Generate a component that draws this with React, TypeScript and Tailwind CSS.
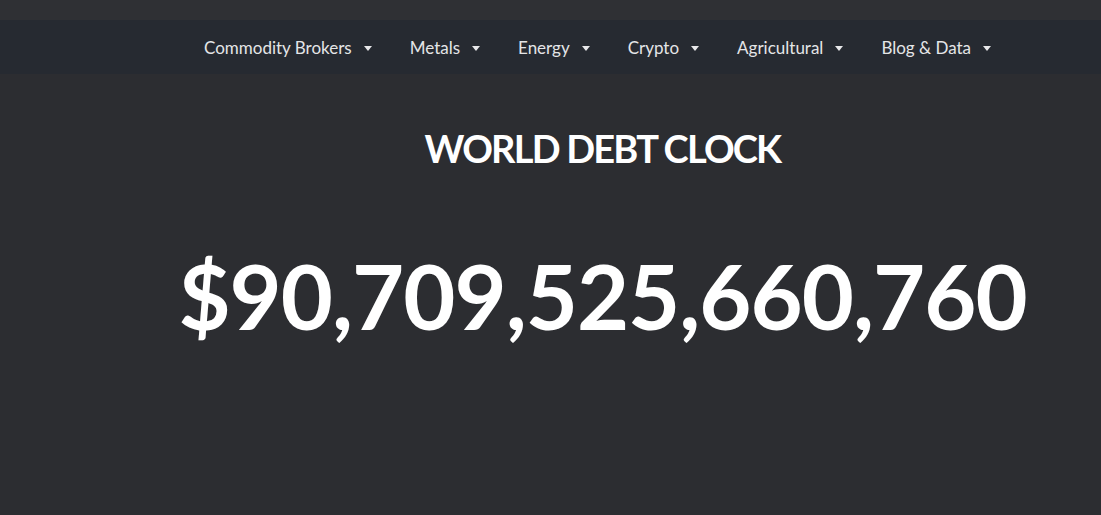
const NAV = ["Commodity Brokers", "Metals", "Energy", "Crypto", "Agricultural", "Blog & Data"];

function Caret() {
  return (
    <svg width="8" height="6" viewBox="0 0 8 6" className="ml-[12px] mt-[1px]">
      <path d="M0 0 L8 0 L4 5 Z" fill="#e8e8ea" />
    </svg>
  );
}

export default function App() {
  return (
    <div className="min-h-[515px] bg-[#2c2d31] font-['Lato',sans-serif] text-white">
      <div className="h-[20px] bg-[#2f3034]" />
      <nav className="h-[54px] bg-[#262a31] flex items-center justify-center pl-[94px] pt-[2px]">
        <ul className="flex items-center gap-[38px]">
          {NAV.map(n => (
            <li key={n} className="flex items-center text-[17px] text-[#e4e5e7]">
              {n}
              <Caret />
            </li>
          ))}
        </ul>
      </nav>
      <main className="flex flex-col items-center pl-[104px]">
        <h1 className="mt-[51px] text-[38px] leading-[46px] font-bold tracking-[-1.8px]">WORLD DEBT CLOCK</h1>
        <div className="mt-[72px] text-[90px] leading-[104px] font-bold tracking-[-1px]">$90,709,525,660,760</div>
      </main>
    </div>
  );
}
